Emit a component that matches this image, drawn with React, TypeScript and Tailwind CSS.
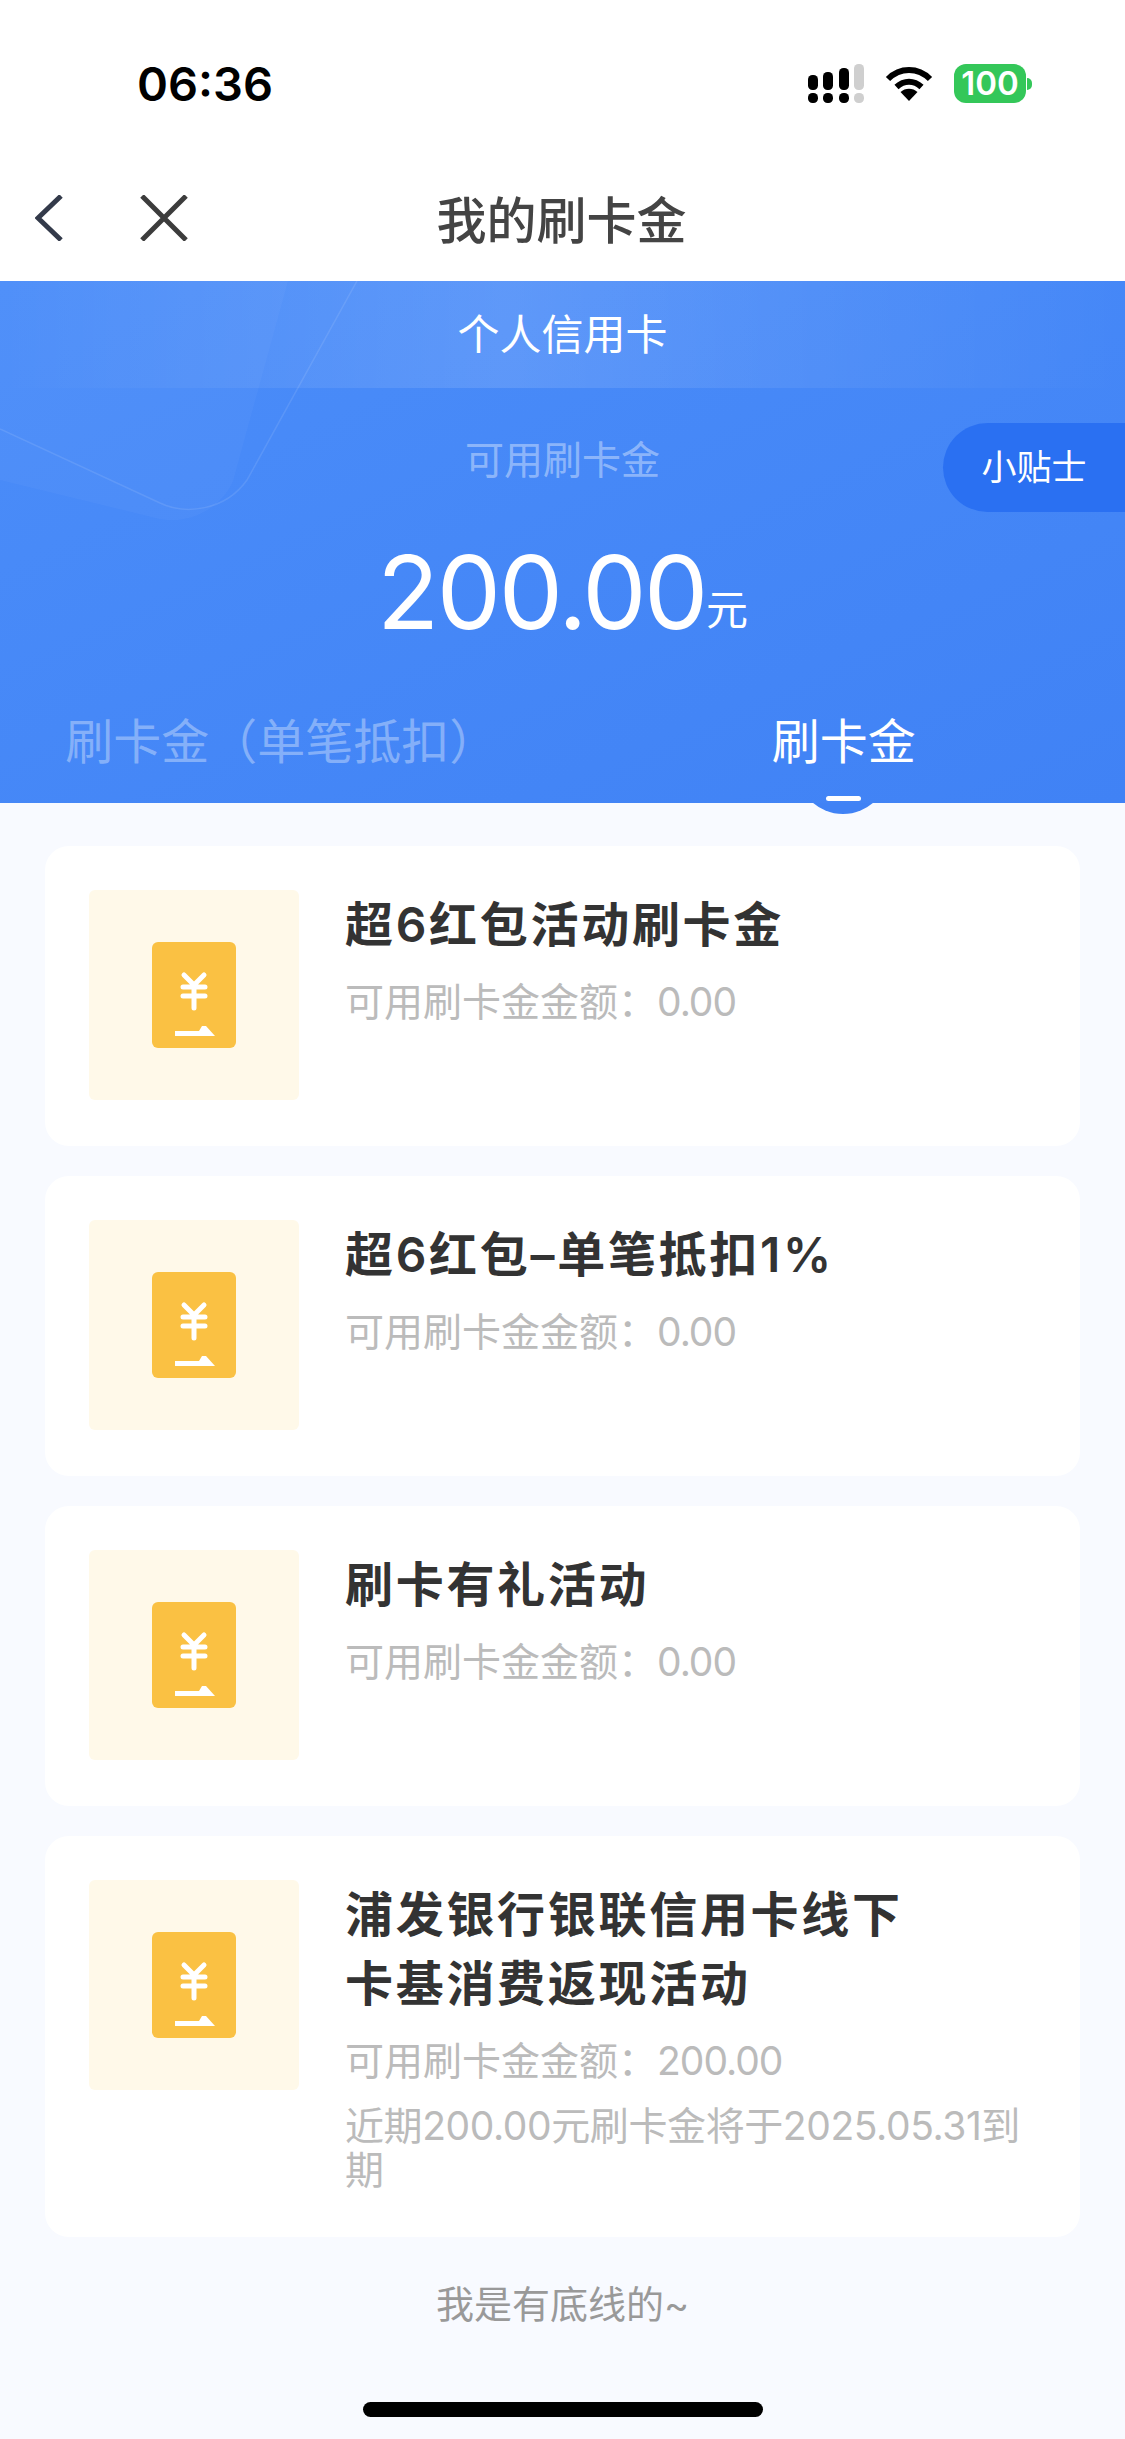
const coupons = [
  { title: '超6红包活动刷卡金', amount: '0.00' },
  { title: '超6红包–单笔抵扣1%', amount: '0.00' },
  { title: '刷卡有礼活动', amount: '0.00' },
  {
    title: '浦发银行银联信用卡线下卡基消费返现活动',
    amount: '200.00',
    note: '近期200.00元刷卡金将于2025.05.31到期',
  },
];

function SignalIcon() {
  return (
    <svg width="56" height="39" viewBox="0 0 56 39">
      <rect x="0" y="11" width="10" height="15" rx="4.5" fill="#000" />
      <rect x="15" y="8" width="10" height="18" rx="4.5" fill="#000" />
      <rect x="31" y="4" width="10" height="22" rx="4.5" fill="#000" />
      <rect x="46" y="0" width="10" height="26" rx="4.5" fill="#cfcfcf" />
      <rect x="0" y="29" width="10" height="10" rx="4.5" fill="#000" />
      <rect x="15" y="29" width="10" height="10" rx="4.5" fill="#000" />
      <rect x="31" y="29" width="10" height="10" rx="4.5" fill="#000" />
      <rect x="46" y="29" width="10" height="10" rx="4.5" fill="#cfcfcf" />
    </svg>
  );
}

function WifiIcon() {
  return (
    <svg width="48" height="35" viewBox="0 0 48 35">
      <path d="M3 13 C15 1 33 1 45 13" fill="none" stroke="#000" strokeWidth="6" />
      <path d="M11.5 21 C19 14 29 14 36.5 21" fill="none" stroke="#000" strokeWidth="6" />
      <path d="M15.5 26 C20 21.5 28 21.5 32.5 26 L24 35 Z" fill="#000" />
    </svg>
  );
}

function CouponIcon() {
  return (
    <svg width="84" height="106" viewBox="0 0 84 106">
      <rect width="84" height="106" rx="6" fill="#fac143" />
      <path
        d="M32 33 L42 43 L52 33 M31 45 H53 M31 54 H53 M42 44 V66"
        fill="none"
        stroke="#fff"
        strokeWidth="5"
        strokeLinecap="round"
      />
      <path d="M23 89 H47 L50 84 H54 L63 94 H23 Z" fill="#fff" />
    </svg>
  );
}

function BackgroundShapes() {
  return (
    <svg className="absolute left-0 top-0" width="400" height="245" viewBox="0 0 400 245">
      <path d="M0 0 H288 L233 200 C222 226 190 244 160 238 L0 199 Z" fill="#fff" fillOpacity="0.03" />
      <path d="M0 148 L160 222 C185 234 225 230 247 199 L357 0" fill="none" stroke="#fff" strokeOpacity="0.1" strokeWidth="1.5" />
    </svg>
  );
}

function CouponCard({ title, amount, note }: { title: string; amount: string; note?: string }) {
  return (
    <div className="flex min-h-[300px] gap-[46px] rounded-[24px] bg-white pb-[45px] pl-[44px] pr-[44px] pt-[44px]">
      <div className="flex h-[210px] w-[210px] shrink-0 items-center justify-center rounded-[6px] bg-[#fff9e9]">
        <CouponIcon />
      </div>
      <div className="min-w-0 flex-1">
        <div className="max-w-[580px] text-[48px] font-semibold leading-[69px] tracking-[2.7px] text-[#333333]">{title}</div>
        <div className="mt-[21px] text-[39px] leading-[44px] text-[#bbbbbb]">
          可用刷卡金金额：<span className="tracking-[-1px]">{amount}</span>
        </div>
        {note && <div className="mt-[21px] text-[39px] leading-[44px] tracking-[-0.4px] text-[#bbbbbb]">{note}</div>}
      </div>
    </div>
  );
}

export default function App() {
  return (
    <div className="flex h-[2439px] w-[1125px] flex-col overflow-hidden bg-[#f8faff] font-['Inter','Noto_Sans_CJK_SC',sans-serif]">
      {/* status bar */}
      <div className="flex h-[168px] items-start justify-between bg-white pl-[137px] pr-[93px] pt-[54px]">
        <span className="text-[47px] font-semibold leading-[60px] text-black">06:36</span>
        <div className="flex items-center gap-[21px] pt-[10px]">
          <SignalIcon />
          <WifiIcon />
          <div className="flex items-center gap-[1px]">
            <div className="flex h-[39px] w-[72px] items-center justify-center rounded-[12px] bg-[#34c759] text-[33px] font-semibold leading-none text-white">
              100
            </div>
            <div className="h-[12px] w-[5px] rounded-r-full bg-[#34c759]" />
          </div>
        </div>
      </div>

      {/* nav bar */}
      <div className="relative flex h-[113px] items-center justify-center bg-white pb-[8px]">
        <div className="absolute left-[35px] top-[27px] flex items-center gap-[77px]">
          <svg width="28" height="46" viewBox="0 0 28 46">
            <path d="M26 1 L3 23 L26 45" fill="none" stroke="#333a4a" strokeWidth="5" />
          </svg>
          <svg width="48" height="46" viewBox="0 0 48 46">
            <path d="M2 1 L46 45 M46 1 L2 45" fill="none" stroke="#3c3c3c" strokeWidth="5" />
          </svg>
        </div>
        <span className="pr-[2px] text-[50px] font-medium leading-none text-[#444444]">我的刷卡金</span>
      </div>

      {/* balance panel */}
      <div className="relative h-[522px] shrink-0 bg-gradient-to-br from-[#4b8df9] to-[#4082f5] text-center">
        <BackgroundShapes />
        <div className="relative flex h-[107px] items-center justify-center bg-gradient-to-r from-[#ffffff00] via-[#ffffff1f] via-45% to-[#ffffff00] text-[42px] text-white">
          个人信用卡
        </div>
        <div className="relative mt-[50px] text-[39px] leading-[44px] text-[#ffffff66]">可用刷卡金</div>
        <div className="relative mt-[48px] flex items-baseline justify-center text-white">
          <span className="text-[102px] font-normal leading-[124px] tracking-[-2.5px]">200.00</span>
          <span className="-translate-y-[4px] text-[42px] leading-none">元</span>
        </div>
        <div className="relative mt-[56px] flex text-[48px] leading-[64px]">
          <div className="flex-1 text-[#ffffff59]">刷卡金（单笔抵扣）</div>
          <div className="flex-1 text-white">刷卡金</div>
        </div>
        <div className="absolute right-0 top-[142px] flex h-[89px] w-[182px] items-center justify-center rounded-l-[45px] bg-[#2a70f2] text-[35px] text-white">
          小贴士
        </div>
        {/* active tab marker */}
        <div className="absolute bottom-[-11px] left-[813px] h-[11px] w-[60px] overflow-hidden">
          <div className="absolute bottom-0 left-[-16px] h-[92px] w-[92px] rounded-full bg-[#4082f5]" />
        </div>
        <div className="absolute bottom-[2px] left-[826px] h-[5px] w-[35px] rounded-full bg-white" />
      </div>

      {/* coupon list */}
      <div className="flex flex-col gap-[30px] px-[45px] pt-[43px]">
        {coupons.map((coupon) => (
          <CouponCard key={coupon.title} title={coupon.title} amount={coupon.amount} note={coupon.note} />
        ))}
      </div>

      <div className="mt-[44px] text-center text-[38px] leading-[46px] text-[#999999]">我是有底线的~</div>
      <div className="mx-auto mt-[75px] h-[15px] w-[400px] rounded-full bg-black" />
    </div>
  );
}
